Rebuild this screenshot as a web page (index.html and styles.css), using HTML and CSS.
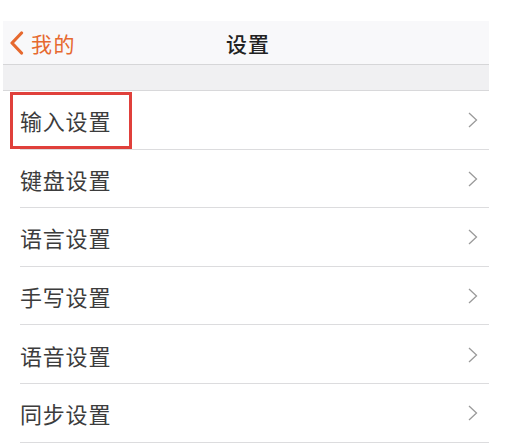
FILE: index.html
```html
<!DOCTYPE html>
<html lang="zh-CN">
<head>
<meta charset="utf-8">
<title>设置</title>
<link rel="stylesheet" href="styles.css">
</head>
<body>
<div class="screen">
  <header class="nav">
    <div class="back">
      <svg class="back-icon" width="15" height="24" viewBox="0 0 15 24"><path d="M12.5 2 L3 12 L12.5 22" fill="none" stroke="#e6692f" stroke-width="3.2" stroke-linecap="round" stroke-linejoin="round"/></svg>
      <span class="back-text">我的</span>
    </div>
    <div class="title">设置</div>
  </header>
  <div class="gap"></div>
  <ul class="list">
    <li class="row"><span class="label">输入设置</span><svg class="chev" width="10" height="16" viewBox="0 0 10 16"><path d="M1 1 L8.5 8 L1 15" fill="none" stroke="#9a9a9a" stroke-width="1.3"/></svg><span class="mark"></span></li>
    <li class="row"><span class="label">键盘设置</span><svg class="chev" width="10" height="16" viewBox="0 0 10 16"><path d="M1 1 L8.5 8 L1 15" fill="none" stroke="#9a9a9a" stroke-width="1.3"/></svg></li>
    <li class="row"><span class="label">语言设置</span><svg class="chev" width="10" height="16" viewBox="0 0 10 16"><path d="M1 1 L8.5 8 L1 15" fill="none" stroke="#9a9a9a" stroke-width="1.3"/></svg></li>
    <li class="row"><span class="label">手写设置</span><svg class="chev" width="10" height="16" viewBox="0 0 10 16"><path d="M1 1 L8.5 8 L1 15" fill="none" stroke="#9a9a9a" stroke-width="1.3"/></svg></li>
    <li class="row"><span class="label">语音设置</span><svg class="chev" width="10" height="16" viewBox="0 0 10 16"><path d="M1 1 L8.5 8 L1 15" fill="none" stroke="#9a9a9a" stroke-width="1.3"/></svg></li>
    <li class="row"><span class="label">同步设置</span><svg class="chev" width="10" height="16" viewBox="0 0 10 16"><path d="M1 1 L8.5 8 L1 15" fill="none" stroke="#9a9a9a" stroke-width="1.3"/></svg></li>
  </ul>
</div>
</body>
</html>
```
FILE: styles.css
```css
html, body {
  margin: 0;
  padding: 0;
  background: #ffffff;
}
body {
  font-family: "Noto Sans CJK SC", "Noto Sans", sans-serif;
}
.screen {
  width: 486px;
  margin-left: 3px;
  padding-top: 21px;
}
.nav {
  height: 43px;
  background: #f8f8fa;
  border-bottom: 1px solid #d6d6d8;
  display: flex;
  align-items: center;
  position: relative;
}
.back {
  display: flex;
  align-items: center;
  gap: 7px;
  padding-left: 6px;
  height: 100%;
}
.back-icon {
  display: block;
  margin-top: 1px;
}
.back-text {
  color: #e6692f;
  font-size: 21px;
  line-height: 24px;
  letter-spacing: 1.5px;
}
.title {
  position: absolute;
  left: 0;
  right: 0;
  top: 0;
  bottom: 0;
  display: flex;
  align-items: center;
  justify-content: center;
  padding-left: 4px;
  font-size: 21px;
  font-weight: 500;
  color: #222;
  letter-spacing: 1px;
  pointer-events: none;
}
.gap {
  height: 25px;
  background: #f0f0f2;
  border-bottom: 1px solid #d8d8da;
}
.list {
  list-style: none;
  margin: 0;
  padding: 0;
}
.row {
  position: relative;
  height: 58.6px;
  display: flex;
  align-items: center;
  justify-content: space-between;
  padding-left: 17px;
  padding-right: 11px;
}
.row::after {
  content: "";
  position: absolute;
  left: 17px;
  right: 0;
  bottom: 0;
  height: 1px;
  background: #dcdcde;
}
.label {
  font-size: 22px;
  color: #3c3c3c;
  letter-spacing: 0.8px;
}
.chev {
  display: block;
}
.mark {
  position: absolute;
  left: 7px;
  top: 1px;
  width: 116px;
  height: 51px;
  border: 3px solid #e0403b;
}
```
